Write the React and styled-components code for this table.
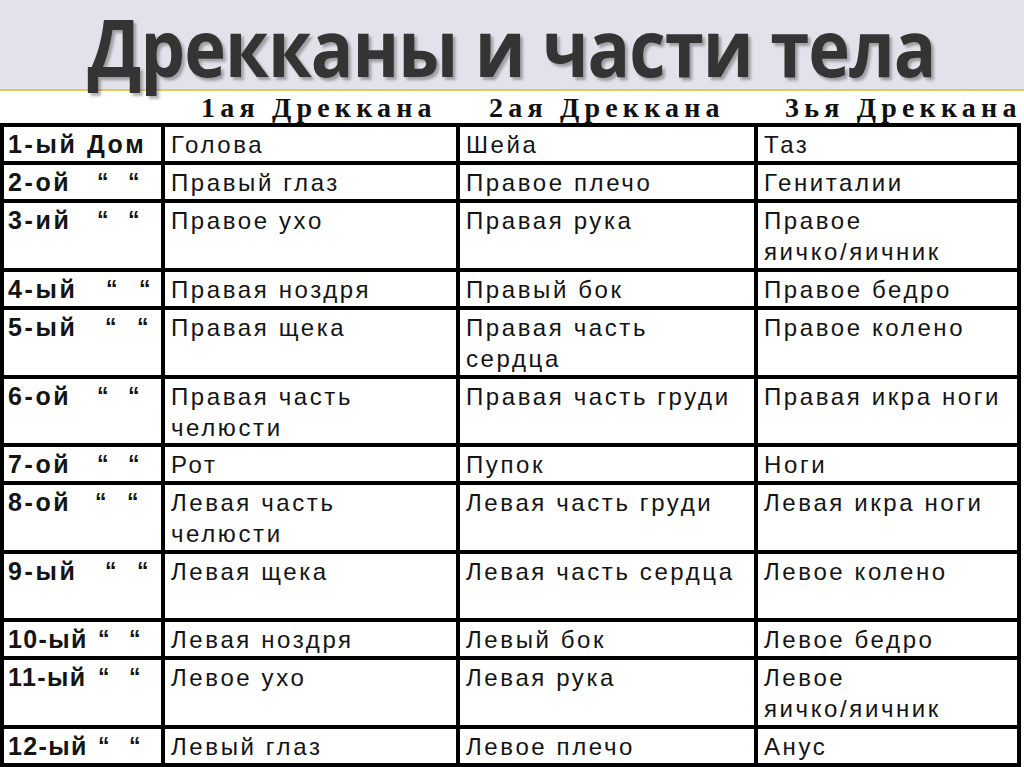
import React from "react";
import styled, { createGlobalStyle } from "styled-components";

const Global = createGlobalStyle`
  html, body { margin: 0; padding: 0; background: #fff; }
  body { width: 1024px; height: 767px; overflow: hidden; }
`;

const Page = styled.div`
  width: 1024px;
  height: 767px;
  display: flex;
  flex-direction: column;
  overflow: hidden;
`;

const TitleBar = styled.div`
  height: 89px;
  background: #e3e1e9;
  border-bottom: 2px solid #e6c766;
  display: flex;
  align-items: flex-start;
  justify-content: center;
`;

const Title = styled.h1`
  margin: 0;
  padding-top: 6px;
  font-family: "Open Sans", "Liberation Sans", sans-serif;
  font-weight: 700;
  font-size: 78px;
  letter-spacing: -1px;
  line-height: 83px;
  white-space: nowrap;
  color: #343434;
  transform: scaleX(0.905);
  text-shadow: 3px 3px 3px rgba(0, 0, 0, 0.3);
`;

const HeaderRow = styled.div`
  height: 33px;
  display: grid;
  grid-template-columns: 161px 295px 298px 270px;
  align-items: start;
  overflow: hidden;
`;

const HeaderCell = styled.div`
  padding-left: ${(p) => p.$indent}px;
  padding-top: 2px;
  font-family: "Liberation Serif", serif;
  font-weight: 700;
  font-size: 28px;
  letter-spacing: 5.2px;
  color: #111;
  white-space: nowrap;
  line-height: 30px;
`;

const Table = styled.div`
  width: 1021px;
  box-sizing: border-box;
  display: grid;
  grid-template-columns: 157px 291px 294px 259px;
  grid-template-rows: ${(p) => p.$rows};
  gap: 4px;
  padding: 4px;
  background: #000;
`;

const Cell = styled.div`
  background: #fff;
  padding: 2px 10px 0 6px;
  font-family: "Liberation Sans", Arial, sans-serif;
  font-size: 24px;
  line-height: 31px;
  letter-spacing: 2.6px;
  color: #141414;
  overflow: hidden;
`;

const HouseCell = styled(Cell)`
  padding: 2px 0 0 4px;
  font-weight: 700;
  font-size: 25px;
  display: grid;
  grid-template-columns: ${(p) => (p.$q ? `${p.$q[0]}px ${p.$q[1]}px auto` : "auto")};
  align-content: start;
  white-space: nowrap;
`;

const HouseLabel = styled.span`
  letter-spacing: ${(p) => (p.$tight ? "1.4px" : "2.6px")};
`;

const Quote = styled.span`
  font-size: 23px;
  line-height: 31px;
  letter-spacing: 0;
`;

const rows = [
  ["1-ый Дом", null, 38, "Голова", "Шейа", "Таз"],
  ["2-ой", [97, 128], 38, "Правый глаз", "Правое плечо", "Гениталии"],
  ["3-ий", [97, 128], 69, "Правое ухо", "Правая рука", "Правое яичко/\u2060яичник"],
  ["4-ый", [106, 139], 38, "Правая ноздря", "Правый бок", "Правое бедро"],
  ["5-ый", [105, 137], 69, "Правая щека", "Правая часть сердца", "Правое колено"],
  ["6-ой", [97, 128], 68, "Правая часть челюсти", "Правая часть груди", "Правая икра ноги"],
  ["7-ой", [97, 128], 38, "Рот", "Пупок", "Ноги"],
  ["8-ой", [95, 127], 69, "Левая часть челюсти", "Левая часть груди", "Левая икра ноги"],
  ["9-ый", [105, 137], 68, "Левая щека", "Левая часть сердца", "Левое колено"],
  ["10-ый", [98, 129], 38, "Левая ноздря", "Левый бок", "Левое бедро"],
  ["11-ый", [98, 129], 69, "Левое ухо", "Левая рука", "Левое яичко/\u2060яичник"],
  ["12-ый", [98, 129], 38, "Левый глаз", "Левое плечо", "Анус"],
];

const rowTemplate = rows.map((r) => `${r[2] - 4}px`).join(" ");

export default function App() {
  return (
    <Page>
      <Global />
      <TitleBar>
        <Title>Дрекканы и части тела</Title>
      </TitleBar>
      <HeaderRow>
        <div />
        <HeaderCell $indent={40}>1ая Дреккана</HeaderCell>
        <HeaderCell $indent={33}>2ая Дреккана</HeaderCell>
        <HeaderCell $indent={31}>3ья Дреккана</HeaderCell>
      </HeaderRow>
      <Table $rows={rowTemplate}>
        {rows.map(([house, q, , a, b, c], i) => (
          <React.Fragment key={i}>
            <HouseCell $q={q ? [q[0] - 8, q[1] - q[0]] : null}>
              <HouseLabel $tight={house.length > 4 && q !== null}>{house}</HouseLabel>
              {q && <Quote>“</Quote>}
              {q && <Quote>“</Quote>}
            </HouseCell>
            <Cell>{a}</Cell>
            <Cell>{b}</Cell>
            <Cell>{c}</Cell>
          </React.Fragment>
        ))}
      </Table>
    </Page>
  );
}
